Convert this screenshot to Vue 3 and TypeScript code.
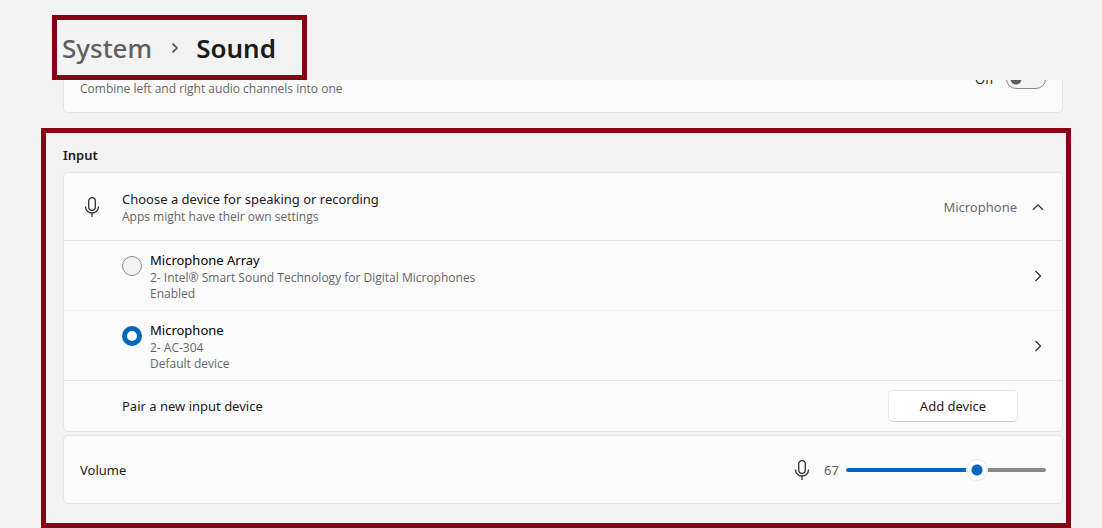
<script setup lang="ts">
import { computed, ref } from 'vue'

interface Device {
  id: string
  name: string
  detail: string
  status: string
}

const devices: Device[] = [
  { id: 'array', name: 'Microphone Array', detail: '2- Intel® Smart Sound Technology for Digital Microphones', status: 'Enabled' },
  { id: 'mic', name: 'Microphone', detail: '2- AC-304', status: 'Default device' },
]

const selected = ref('mic')
const mono = ref(false)
const volume = ref(67)
const fill = computed(() => ({ '--fill': `${volume.value}%` }))
</script>

<template>
  <div class="page">
    <header class="header">
      <nav class="crumbs" aria-label="Breadcrumb">
        <a class="crumb" href="#system">System</a>
        <svg class="crumb-sep" viewBox="0 0 12 12" aria-hidden="true"><path d="M3.5 1.5 8 6l-4.5 4.5" /></svg>
        <h1 class="title">Sound</h1>
      </nav>
    </header>

    <section class="scrolled">
      <div class="card mono">
        <label class="sub" for="mono">Combine left and right audio channels into one</label>
        <span class="state">{{ mono ? 'On' : 'Off' }}</span>
        <input id="mono" v-model="mono" class="switch" type="checkbox" role="switch" />
      </div>
    </section>

    <main class="highlight">
      <h2 class="group">Input</h2>

      <div class="card">
        <div class="row head">
          <svg class="mic" viewBox="0 0 20 22" aria-hidden="true">
            <rect x="6.7" y="1.7" width="6.6" height="12.6" rx="3.3" />
            <path d="M3.6 10.5v.8a6.4 5.7 0 0 0 12.8 0v-.8M10 17v4" />
          </svg>
          <div class="texts">
            <span class="name">Choose a device for speaking or recording</span>
            <span class="sub">Apps might have their own settings</span>
          </div>
          <span class="current">Microphone</span>
          <button class="icon-button" type="button" aria-label="Collapse">
            <svg class="chevron" viewBox="0 0 12 12" aria-hidden="true"><path d="M1 8.8 6 3.8l5 5" /></svg>
          </button>
        </div>

        <div v-for="d in devices" :key="d.id" class="row device">
          <input :id="d.id" v-model="selected" class="radio" type="radio" name="device" :value="d.id" />
          <label class="texts" :for="d.id">
            <span class="name strong">{{ d.name }}</span>
            <span class="sub">{{ d.detail }}</span>
            <span class="sub">{{ d.status }}</span>
          </label>
          <button class="icon-button" type="button" :aria-label="`${d.name} properties`">
            <svg class="chevron" viewBox="0 0 12 12" aria-hidden="true"><path d="M3.5 1 8.5 6l-5 5" /></svg>
          </button>
        </div>

        <div class="row pair">
          <span class="name">Pair a new input device</span>
          <button class="add" type="button">Add device</button>
        </div>
      </div>

      <div class="card volume">
        <label class="name grow" for="volume">Volume</label>
        <svg class="mic" viewBox="0 0 20 22" aria-hidden="true">
          <rect x="6.7" y="1.7" width="6.6" height="12.6" rx="3.3" />
          <path d="M3.6 10.5v.8a6.4 5.7 0 0 0 12.8 0v-.8M10 17v4" />
        </svg>
        <output class="level" for="volume">{{ volume }}</output>
        <input id="volume" v-model.number="volume" class="slider" type="range" min="0" max="100" :style="fill" />
      </div>
    </main>
  </div>
</template>

<style>
body {
  margin: 0;
  background: #f3f3f3;
}
</style>

<style scoped>
.page {
  box-sizing: border-box;
  min-height: 100vh;
  background: #f3f3f3;
  color: #1b1b1b;
  font-family: "Noto Sans", "Open Sans", sans-serif;
  font-size: 13px;
  line-height: 20px;
}
.page * {
  box-sizing: border-box;
}
.header {
  display: flex;
  padding: 15px 52px 0;
}
.crumbs {
  display: flex;
  align-items: center;
  height: 65px;
  padding: 1px 26px 0 5px;
  border: 5px solid #880016;
}
.crumb,
.title {
  margin: 0;
  font-size: 26px;
  line-height: 36px;
  font-weight: 500;
}
.crumb {
  color: #5f5f5f;
  text-decoration: none;
}
.title {
  color: #1b1b1b;
  font-weight: 600;
}
svg {
  flex: none;
  fill: none;
  stroke: #303030;
  stroke-width: 1.3;
}
.crumb-sep {
  width: 12px;
  height: 12px;
  margin: 0 15px 0 17px;
  stroke: #5f5f5f;
  stroke-width: 1.8;
}
.scrolled {
  display: flex;
  align-items: flex-end;
  height: 33px;
  margin: 0 39px 15px 63px;
  overflow: hidden;
}
.card {
  border: 1px solid #e5e5e5;
  border-radius: 5px;
  background: #fbfbfb;
}
.mono {
  display: flex;
  flex: 1;
  align-items: center;
  height: 69px;
  padding: 0 16px;
}
.mono .sub {
  flex: 1;
  padding-top: 20px;
}
.state {
  margin-right: 12px;
}
.switch {
  appearance: none;
  width: 40px;
  height: 20px;
  margin: 0;
  border: 1px solid #8a8a8a;
  border-radius: 10px;
  background: radial-gradient(circle at 9px 9px, #5c5c5c 5px, transparent 6px) #f3f3f3;
}
.switch:checked {
  background: radial-gradient(circle at 29px 9px, #ffffff 5px, transparent 6px) #0067c0;
}
.highlight {
  padding: 12px 3px 19px 17px;
  margin: 0 31px 0 41px;
  border: 5px solid #880016;
}
.group {
  margin: 0 0 7px;
  font-size: 13px;
  line-height: 20px;
  font-weight: 600;
}
.row {
  display: flex;
  align-items: center;
  padding-right: 18px;
}
.row + .row {
  border-top: 1px solid #e5e5e5;
}
.device + .device {
  border-top-color: #f0f0f0;
}
.head {
  height: 67px;
  padding-left: 18px;
}
.head .texts {
  margin-left: 20px;
}
.mic {
  width: 20px;
  height: 22px;
}
.texts {
  display: flex;
  flex: 1;
  flex-direction: column;
}
.sub {
  color: #666666;
  font-family: "Open Sans", "Noto Sans", sans-serif;
  font-size: 12px;
  line-height: 16px;
}
.current {
  margin-right: 15px;
  color: #6b6b6b;
}
.icon-button {
  display: flex;
  padding: 0;
  border: 0;
  background: none;
}
.chevron {
  width: 12px;
  height: 12px;
}
.device {
  height: 70px;
  padding-left: 58px;
}
.radio {
  appearance: none;
  align-self: flex-start;
  width: 20px;
  height: 20px;
  margin: 15px 8px 0 0;
  border: 1px solid #8a8a8a;
  border-radius: 50%;
  background: #f3f3f3;
}
.radio:checked {
  border: 5px solid #0067c0;
  background: #ffffff;
}
.strong {
  color: #000000;
}
.pair {
  height: 51px;
  padding: 0 44px 0 58px;
  justify-content: space-between;
}
.add {
  width: 130px;
  height: 32px;
  border: 1px solid #e6e6e6;
  border-bottom-color: #cccccc;
  border-radius: 5px;
  background: #ffffff;
  color: #1b1b1b;
  font: inherit;
}
.volume {
  display: flex;
  align-items: center;
  height: 69px;
  margin-top: 3px;
  padding: 0 16px;
}
.grow {
  flex: 1;
}
.level {
  width: 34px;
  padding-left: 12px;
  color: #5f5f5f;
}
.slider {
  appearance: none;
  width: 200px;
  height: 4px;
  margin: 0;
  border-radius: 2px;
  background: linear-gradient(to right, #0067c0 var(--fill), #8a8a8a var(--fill));
}
.slider::-webkit-slider-thumb {
  appearance: none;
  width: 20px;
  height: 20px;
  border-radius: 50%;
  background: radial-gradient(circle, #0067c0 5px, #ffffff 6px);
  box-shadow: 0 0 0 1px #e9e9e9;
}
</style>
